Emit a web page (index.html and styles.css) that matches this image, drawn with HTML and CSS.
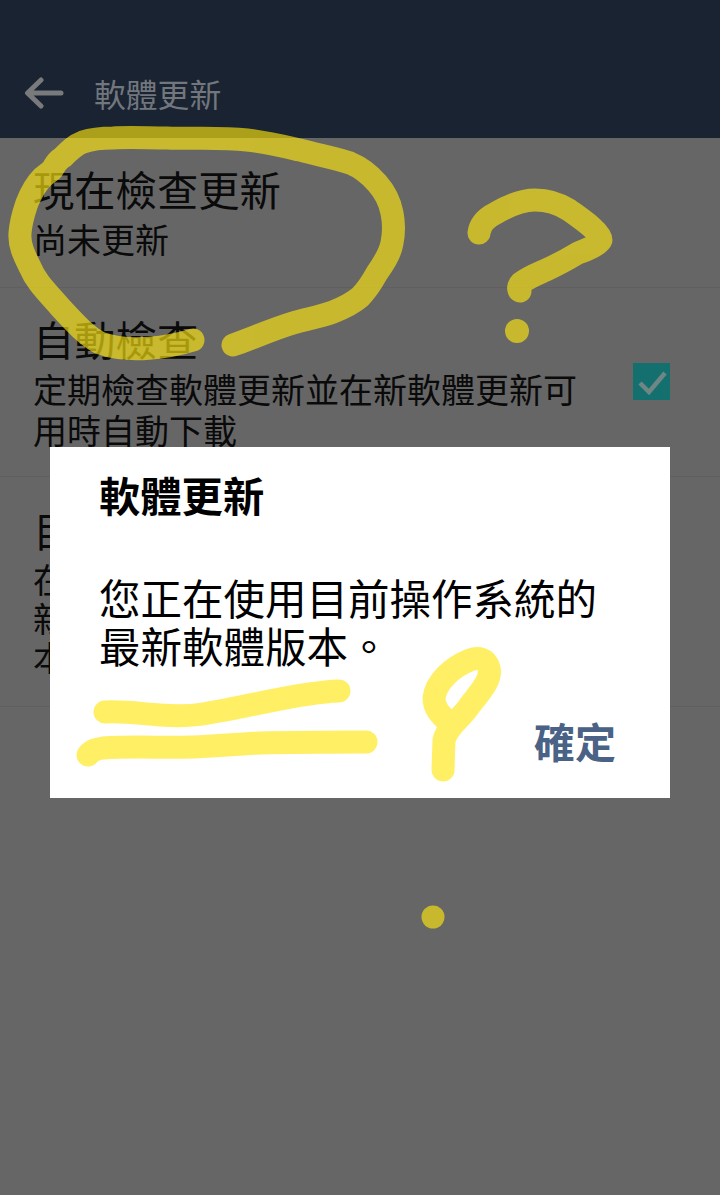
FILE: index.html
```html
<!DOCTYPE html>
<html>
  <head>
    <title>軟體更新</title>
    <link rel="stylesheet" href="styles.css">
  </head>

  <body>
    <div class="header">
      <svg class="back-icon" viewBox="0 0 40 32" width="40" height="32">
        <path d="M37 16H4M17 3L3.500 16L17 29" />
      </svg>
      <div class="header-title">軟體更新</div>
    </div>

    <div class="settings">
      <div class="row row-check">
        <div class="row-text">
          <div class="row-title">現在檢查更新</div>
          <div class="row-sub">尚未更新</div>
        </div>
      </div>
      <div class="row row-auto">
        <div class="row-text">
          <div class="row-title">自動檢查</div>
          <div class="row-sub">定期檢查軟體更新並在新軟體更新可<br>用時自動下載</div>
        </div>
        <div class="checkbox">
          <svg viewBox="0 0 37 37" width="37" height="37">
            <path d="M7 20L16 29L32 10" />
          </svg>
        </div>
      </div>
      <div class="row row-current">
        <div class="row-text">
          <div class="row-title">目</div>
          <div class="row-sub">在<br>新<br>本</div>
        </div>
      </div>
    </div>

    <div class="dialog">
      <div class="dialog-title">軟體更新</div>
      <div class="dialog-body">您正在使用目前操作系統的<br>最新軟體版本。</div>
      <div class="dialog-actions">
        <div class="dialog-button">確定</div>
      </div>
    </div>

    <!-- marker scribbles drawn over the screenshot -->
    <svg class="scribbles" viewBox="0 0 720 1195" width="720" height="1195">
      <g class="marker">
        <path d="M193 340C170 347 130 354 100 343C85 335 72 320 60 307C48 293 36 282 30 267C24 255 19 245 20 233C21 220 24 212 27 203C31 193 36 184 43 177L52 170C56 163 58 160 63 157C70 150 75 145 83 142C92 139 102 138 113 138C130 137 148 138 167 138C195 139 220 137 247 140C265 142 282 146 300 150C318 155 335 158 350 163C362 168 370 175 377 183C385 192 390 202 392 213C394 223 394 233 392 243C390 254 384 263 377 273C372 282 367 290 360 297C352 304 343 308 333 312C320 317 306 319 293 323C273 329 253 338 233 345" />
        <path d="M479 233C480 224 486 218 496 213C508 206 522 200 535 200C547 200 558 203 569 210C580 218 601 232 601 240C597 246 586 250 578 253C568 259 557 265 546 270C537 274 529 277 521 283C518 286 518 290 520 291" />
        <circle cx="517" cy="331" r="12" />
        <circle cx="433" cy="917" r="11.500" />
        <path d="M105 712C125 711 143 714 160 715C175 716 190 716 203 714C222 711 241 707 260 703C285 698 312 692 339 691" />
        <path d="M88 755C92 750 97 749 103 748C133 746 163 748 193 747C215 746 238 744 260 743C295 742 330 742 366 742" />
        <path d="M443 770L444 740C448 725 462 718 470 705C480 692 492 680 489 668C486 658 478 657 470 660C452 667 436 682 434 698C434 708 440 714 446 720" />
      </g>
    </svg>
  </body>
</html>
```

FILE: styles.css
```css
html,
body {
  margin: 0;
  padding: 0;
}

body {
  position: relative;
  height: 1195px;
  overflow: hidden;
  background-color: #666;
  color: #0a0a0a;
  font-family: "Noto Sans CJK TC", "Noto Sans", sans-serif;
}

.header {
  height: 88px;
  padding-top: 50px;
  padding-left: 24px;
  display: flex;
  align-items: center;
  background-color: #1a2331;
}

.back-icon {
  margin-right: 30px;
  margin-top: -2px;
}

.back-icon path {
  fill: none;
  stroke: #787a7c;
  stroke-width: 5;
  stroke-linecap: round;
  stroke-linejoin: round;
}

.header-title {
  font-size: 31.800px;
  line-height: 40px;
  margin-top: -3px;
  color: #72777e;
}

.row {
  box-sizing: border-box;
  display: flex;
  justify-content: space-between;
  padding-left: 33px;
  padding-right: 50px;
  border-bottom: 1px solid #5f5f5f;
}

.row-check {
  height: 150px;
  padding-top: 25px;
}

.row-auto {
  height: 189px;
  padding-top: 25px;
}

.row-current {
  height: 230px;
  padding-top: 27px;
}

.row-title {
  font-size: 41.300px;
  line-height: 50px;
  margin-bottom: 5px;
}

.row-sub {
  font-size: 34px;
  line-height: 41px;
}

.row-current .row-sub {
  line-height: 39px;
}

.checkbox {
  width: 37px;
  height: 37px;
  margin-top: 50px;
  background-color: #14706e;
}

.checkbox path {
  fill: none;
  stroke: #6f8685;
  stroke-width: 4.500;
}

.dialog {
  position: absolute;
  top: 447px;
  left: 50px;
  box-sizing: border-box;
  width: 620px;
  height: 351px;
  padding: 22px 54px 33px 49px;
  display: flex;
  flex-direction: column;
  background-color: #fff;
  color: #000;
}

.dialog-title {
  font-size: 41.300px;
  font-weight: bold;
  line-height: 50px;
}

.dialog-body {
  margin-top: 54px;
  font-size: 41.500px;
  line-height: 48px;
  white-space: nowrap;
}

.dialog-actions {
  margin-top: auto;
  display: flex;
  justify-content: flex-end;
}

.dialog-button {
  font-size: 41px;
  font-weight: bold;
  line-height: 50px;
  color: #4a6285;
}

.scribbles {
  position: absolute;
  top: 0;
  left: 0;
}

.marker {
  opacity: 0.64;
}

.marker path {
  fill: none;
  stroke: #ffe710;
  stroke-width: 23;
  stroke-linecap: round;
  stroke-linejoin: round;
}

.marker circle {
  fill: #ffe710;
}
```
